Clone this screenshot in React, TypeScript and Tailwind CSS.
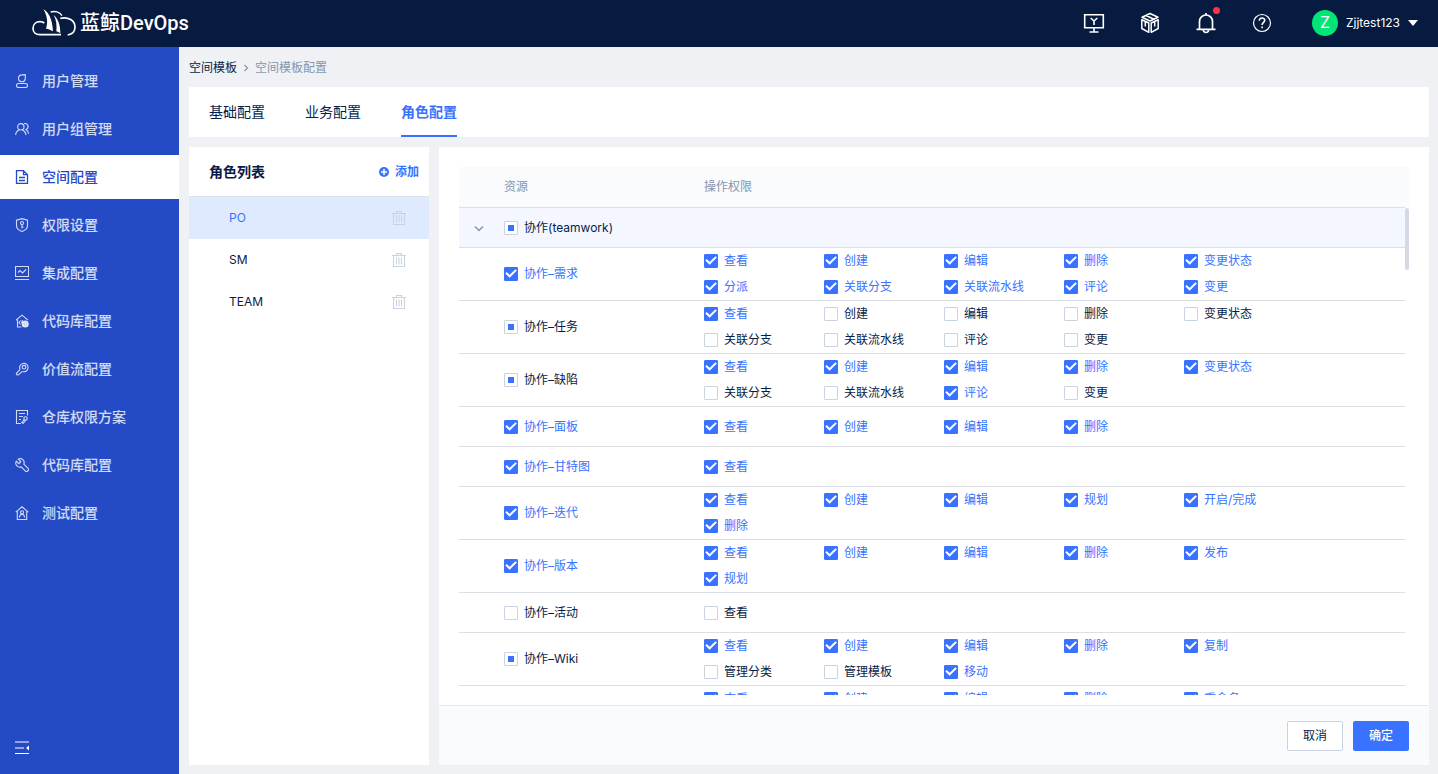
import { useEffect, useRef, useState, type ReactNode } from "react";

type State = "on" | "off" | "part";

function CheckItem({ label, initial }: { label: string; initial: State }) {
  const [state, setState] = useState<State>(initial);
  const ref = useRef<HTMLInputElement>(null);
  useEffect(() => {
    if (ref.current) ref.current.indeterminate = state === "part";
  }, [state]);
  const on = state === "on";
  return (
    <label className={`flex h-[26px] cursor-pointer items-center gap-1.5 whitespace-nowrap ${on ? "text-[#3872ff]" : "text-[#081c48]"}`}>
      <span className="grid size-3.5 shrink-0">
        <input
          ref={ref}
          type="checkbox"
          checked={on}
          onChange={() => setState(on ? "off" : "on")}
          className={`size-3.5 cursor-pointer appearance-none rounded-[1px] border [grid-area:1/1] ${on ? "border-[#3872ff] bg-[#3872ff]" : "border-[#c9d4e3] bg-white"}`}
        />
        {on && (
          <svg viewBox="0 0 14 14" className="pointer-events-none size-3.5 [grid-area:1/1]" fill="none" stroke="#fff" strokeWidth="2">
            <path d="M2 5.800 5.600 9.300 12.200 2.900" />
          </svg>
        )}
        {state === "part" && <span className="pointer-events-none size-1.5 place-self-center bg-[#3872ff] [grid-area:1/1]" />}
      </span>
      <span>{label}</span>
    </label>
  );
}

function Icon({ children, className = "size-3.5" }: { children: ReactNode; className?: string }) {
  return (
    <svg viewBox="0 0 14 14" className={`shrink-0 ${className}`} fill="none" stroke="currentColor" strokeWidth="1.1" aria-hidden="true">
      {children}
    </svg>
  );
}

const menu: { label: string; icon: ReactNode; active?: boolean }[] = [
  {
    label: "用户管理",
    icon: (
      <>
        <path d="M10.300.6v4A3.400 3.400 0 1 1 6.900.9Z" />
        <rect x="1.500" y="9.500" width="11" height="4" rx="2" />
      </>
    ),
  },
  {
    label: "用户组管理",
    icon: (
      <>
        <circle cx="5.800" cy="4.800" r="3.200" />
        <path d="M.6 13c.4-2.800 2-4.600 3.800-5.200M7.200 7.800c2 .8 3.400 2.500 3.800 5.200M9 1.700a3 3 0 0 1 2 5.700c1.400.8 2.300 2.400 2.500 4.400" />
      </>
    ),
  },
  {
    label: "空间配置",
    active: true,
    icon: <path d="M1.500.7h7l4 4v8.800h-11ZM8.500.5v4.200h4M4 7.500h6M4 10.500h6" strokeWidth="1.300" />,
  },
  {
    label: "权限设置",
    icon: (
      <>
        <path d="M7 .6 12.500 2.200v5.200c0 2.800-2.400 4.900-5.500 6-3.100-1.100-5.500-3.200-5.500-6V2.200Z" />
        <circle cx="7" cy="5" r="1.500" />
        <path d="M7 6.500v4M7 9h1.500" />
      </>
    ),
  },
  {
    label: "集成配置",
    icon: <path d="M.5.5h13v10H.5ZM3 6.500l2-2 2.500 2.500 3.500-3.500M0 13.500h14" />,
  },
  {
    label: "代码库配置",
    icon: (
      <>
        <path d="M1 6.200 7 1.200l6 5M2.500 5.500v7.500h4M5.500 6.500 4 8.500l1.500 2M7.500 6l-1 3" />
        <circle cx="10.200" cy="10" r="3" fill="currentColor" />
      </>
    ),
  },
  {
    label: "价值流配置",
    icon: (
      <>
        <path d="M5 7.200a4.200 4.200 0 1 1 2.700 2.400M5.200 7.300 1.600 11a1.300 1.300 0 0 0 1.800 1.800L7.300 9.300" />
        <circle cx="9" cy="5.200" r="1.800" />
      </>
    ),
  },
  {
    label: "仓库权限方案",
    icon: (
      <>
        <path d="M6 13.500H1.500V.5h11v5M4 3.500h6M4 6.500h4M4 9.500h2" />
        <circle cx="10.500" cy="8.500" r="1.700" />
        <path d="M9.300 9.700 6.800 12.500l1.400.8L10.500 10.500" />
      </>
    ),
  },
  {
    label: "代码库配置",
    icon: (
      <path d="M3.200 1.200 5.800 3.800 4 5.700 1.300 3.200C.4 5 .8 6.900 2.200 8.100c1.200 1 2.700 1.200 4 .8l4 4a1.900 1.900 0 0 0 2.700-2.700L8.800 6.200C9.500 4.600 9 2.800 7.900 1.700 6.600.5 4.700.4 3.200 1.200Z" />
    ),
  },
  {
    label: "测试配置",
    icon: (
      <>
        <path d="M.7 6.200 7 .8l6.300 5.400M2.300 5.200v8.300h9.400V5.200" />
        <circle cx="7" cy="6.300" r="1.600" />
        <path d="M4.400 11.500c.2-2.200 1.200-3.200 2.600-3.200s2.400 1 2.600 3.200" />
      </>
    ),
  },
];

type Row = { name: string; state: State; actions: [string, boolean][] };

const rows: Row[] = [
  { name: "协作–需求", state: "on", actions: [["查看", true], ["创建", true], ["编辑", true], ["删除", true], ["变更状态", true], ["分派", true], ["关联分支", true], ["关联流水线", true], ["评论", true], ["变更", true]] },
  { name: "协作–任务", state: "part", actions: [["查看", true], ["创建", false], ["编辑", false], ["删除", false], ["变更状态", false], ["关联分支", false], ["关联流水线", false], ["评论", false], ["变更", false]] },
  { name: "协作–缺陷", state: "part", actions: [["查看", true], ["创建", true], ["编辑", true], ["删除", true], ["变更状态", true], ["关联分支", false], ["关联流水线", false], ["评论", true], ["变更", false]] },
  { name: "协作–面板", state: "on", actions: [["查看", true], ["创建", true], ["编辑", true], ["删除", true]] },
  { name: "协作–甘特图", state: "on", actions: [["查看", true]] },
  { name: "协作–迭代", state: "on", actions: [["查看", true], ["创建", true], ["编辑", true], ["规划", true], ["开启/完成", true], ["删除", true]] },
  { name: "协作–版本", state: "on", actions: [["查看", true], ["创建", true], ["编辑", true], ["删除", true], ["发布", true], ["规划", true]] },
  { name: "协作–活动", state: "off", actions: [["查看", false]] },
  { name: "协作–Wiki", state: "part", actions: [["查看", true], ["创建", true], ["编辑", true], ["删除", true], ["复制", true], ["管理分类", false], ["管理模板", false], ["移动", true]] },
  { name: "协作–文件", state: "on", actions: [["查看", true], ["创建", true], ["编辑", true], ["删除", true], ["重命名", true], ["移动", true]] },
];

function Header() {
  return (
    <header className="flex h-[47px] shrink-0 items-center bg-[#071a40] pr-5 pb-0.5 pl-8 text-white">
      <a href="#" className="flex items-center gap-1 font-[Roboto,'Noto_Sans_CJK_SC',sans-serif] text-xl font-medium">
        <svg viewBox="96 24 132 84" className="h-7 w-11" fill="none" stroke="#fff" strokeWidth="5" aria-hidden="true">
          <path d="M183 101h-64c-12 0-20-8-20-19 0-12 9-20 21-20 5 0 9 1 13 4" />
          <path d="M130 25c17 9 27 31 29 66-6-4-13-7-21-8 6-17 5-37-8-58Z" fill="#fff" stroke="none" />
          <path d="M152 33c12-4 27 0 34 11" strokeWidth="4" />
          <path d="M161 42c13 11 20 29 20 55-4-3-8-5-12-6 2-18 0-34-8-49Z" fill="#fff" stroke="none" />
          <path d="M181 52c24-6 44 7 44 26 0 13-8 22-22 24" strokeWidth="5" />
        </svg>
        <span>蓝鲸DevOps</span>
      </a>
      <nav className="ml-auto flex items-center gap-8">
        <button type="button" aria-label="控制台" className="flex size-6 items-center justify-center">
          <svg viewBox="0 0 22 22" className="size-[22px]" fill="none" stroke="currentColor" strokeWidth="1.600">
            <path d="M1.700 2.700h18.600v13H1.700ZM11 15.700V20M6.500 20h9M7.700 6l3.300 3 3.300-3M11 9v4" />
          </svg>
        </button>
        <button type="button" aria-label="应用" className="flex size-6 items-center justify-center">
          <svg viewBox="0 0 22 22" className="size-[22px]" fill="none" stroke="currentColor" strokeWidth="1.500" strokeLinejoin="round">
            <path d="M11 1.500 19 5.300 11 9 3 5.300ZM2.800 7.800 9.800 11v9.300l-7-3.800ZM19.200 7.800 12.200 11v9.300l7-3.800ZM7 3.500l8 3.700M6.300 9.500v5M15.700 9.500v5" />
          </svg>
        </button>
        <button type="button" aria-label="通知" className="relative flex size-6 items-center justify-center">
          <svg viewBox="0 0 22 22" className="size-[22px]" fill="none" stroke="currentColor" strokeWidth="1.700">
            <path d="M1.500 17.300h19M4.500 17V9.500a6.500 6.500 0 0 1 13 0V17M8.200 17.500c.2 1.900 1.300 3 2.800 3s2.600-1.100 2.800-3M11 1v2" />
          </svg>
          <span className="absolute -top-1 -right-0.5 size-[7px] rounded-full bg-[#ff323f]" />
        </button>
        <button type="button" aria-label="帮助" className="flex size-6 items-center justify-center">
          <svg viewBox="0 0 22 22" className="size-[22px]" fill="none" stroke="currentColor" strokeWidth="1.200">
            <circle cx="11" cy="11" r="8.500" />
            <path d="M8.300 8.800c0-3.900 5.600-3.500 5.400-.3-.1 1.800-2.600 2-2.600 4.500M11.100 14.500v1.700" strokeWidth="1.600" />
          </svg>
        </button>
        <button type="button" className="ml-1.5 flex items-center gap-2 text-xs">
          <span className="flex size-[26px] items-center justify-center rounded-full bg-[#00e676] pb-0.5 text-base">Z</span>
          <span>Zjjtest123</span>
          <svg viewBox="0 0 10 6" className="h-1.5 w-2.5" fill="currentColor" aria-hidden="true">
            <path d="M0 0h10L5 6Z" />
          </svg>
        </button>
      </nav>
    </header>
  );
}

function Sidebar() {
  return (
    <aside className="flex w-[179px] shrink-0 flex-col bg-[#244bc5] pt-3">
      <nav className="flex flex-col gap-1">
        {menu.map((m, i) => (
          <a
            key={i}
            href="#"
            className={`flex h-11 items-center gap-[13px] pl-[15px] text-sm font-medium ${m.active ? "bg-white text-[#244bc5]" : "text-white/80"}`}
          >
            <Icon>{m.icon}</Icon>
            {m.label}
          </a>
        ))}
      </nav>
      <button type="button" aria-label="收起" className="mt-auto mb-[19px] ml-[15px] w-3.5 text-white">
        <Icon>
          <path d="M0 1h14M0 7h9M0 12.500h14" strokeWidth="1.200" />
          <path d="M14 4.500v5L11 7Z" fill="currentColor" stroke="none" />
        </Icon>
      </button>
    </aside>
  );
}

function Roles() {
  const [current, setCurrent] = useState("PO");
  return (
    <section className="w-60 shrink-0 bg-white">
      <div className="flex h-[50px] items-center justify-between border-b border-[#dce3ec] pr-2.5 pl-5">
        <h2 className="text-sm font-bold">角色列表</h2>
        <button type="button" className="flex items-center gap-1.5 text-xs font-bold text-[#3872ff]">
          <svg viewBox="0 0 10 10" className="size-2.5" aria-hidden="true">
            <circle cx="5" cy="5" r="5" fill="currentColor" />
            <path d="M5 2v6M2 5h6" stroke="#fff" strokeWidth="1.500" />
          </svg>
          添加
        </button>
      </div>
      <ul>
        {["PO", "SM", "TEAM"].map((r) => (
          <li key={r} className={`flex h-[42px] items-center justify-between pr-[23px] pl-10 ${r === current ? "bg-[#dfeaff] text-[#3872ff]" : ""}`}>
            <button type="button" onClick={() => setCurrent(r)}>
              {r}
            </button>
            <button type="button" aria-label={`删除 ${r}`} className="text-[#c9d4e3]">
              <Icon>
                <path d="M0 2.500h14M4.500 2.500v-2h5v2M1.500 2.500v11h11v-11M4.500 4.500v7M7 4.500v7M9.500 4.500v7" />
              </Icon>
            </button>
          </li>
        ))}
      </ul>
    </section>
  );
}

const rowGrid = "grid grid-cols-[45px_200px_1fr]";

function Permissions() {
  return (
    <section className="flex min-w-0 flex-1 flex-col bg-white">
      <div className="relative mx-5 mt-5 mb-2.5 flex min-h-0 flex-1 flex-col">
        <table className="flex min-h-0 flex-1 flex-col">
          <thead className="block shrink-0 bg-[#fafbfd] text-[#8496ae]">
            <tr className={`mr-1 h-[41px] items-center border-b border-[#dcdfe6] ${rowGrid}`}>
              <th aria-label="展开" />
              <th className="text-left font-normal">资源</th>
              <th className="text-left font-normal">操作权限</th>
            </tr>
          </thead>
          <tbody className="mr-1 block min-h-0 flex-1 overflow-y-auto [scrollbar-width:none]">
            <tr className={`h-10 items-center border-b border-[#dcdfe6] bg-[#f4f7ff] ${rowGrid}`}>
              <td>
                <button type="button" aria-label="收起分组" className="ml-3.5 flex size-3 items-center justify-center text-[#8496ae]">
                  <svg viewBox="0 0 12 12" className="size-3" fill="none" stroke="currentColor" strokeWidth="1.500">
                    <path d="m2 4.500 4 4 4-4" />
                  </svg>
                </button>
              </td>
              <td>
                <CheckItem label="协作(teamwork)" initial="part" />
              </td>
              <td />
            </tr>
            {rows.map((r) => (
              <tr key={r.name} className={`min-h-10 items-center border-b border-[#dcdfe6] ${rowGrid}`}>
                <td />
                <td>
                  <CheckItem label={r.name} initial={r.state} />
                </td>
                <td className="grid grid-cols-[repeat(5,120px)]">
                  {r.actions.map(([label, on]) => (
                    <CheckItem key={label} label={label} initial={on ? "on" : "off"} />
                  ))}
                </td>
              </tr>
            ))}
          </tbody>
        </table>
        <span className="absolute top-[41px] right-0 h-[62px] w-1 rounded-xs bg-[#d3dae3]" />
      </div>
      <footer className="flex h-[60px] shrink-0 items-center justify-end gap-2.5 border-t border-[#e6e9ee] bg-[#fafbfd] px-5">
        <button type="button" className="h-[30px] rounded-xs border border-[#c9d4e3] bg-white px-[15px]">
          取消
        </button>
        <button type="button" className="h-[30px] rounded-xs bg-[#3872ff] px-4 font-medium text-white">
          确定
        </button>
      </footer>
    </section>
  );
}

export default function App() {
  const [tab, setTab] = useState("角色配置");
  return (
    <div className="flex h-screen flex-col bg-[#f0f1f5] font-[Inter,'Noto_Sans_CJK_SC',sans-serif] text-xs text-[#081c48]">
      <Header />
      <div className="flex min-h-0 flex-1">
        <Sidebar />
        <main className="flex min-w-0 flex-1 flex-col px-2.5 pr-[9px] pb-[9px]">
          <nav aria-label="路径" className="flex h-10 shrink-0 items-center gap-1.5 pt-0.5">
            <a href="#">空间模板</a>
            <svg viewBox="0 0 6 8" className="h-2 w-1.5" fill="none" stroke="#8496ae" strokeWidth="1.200" aria-hidden="true">
              <path d="m1.500 1 3 3-3 3" />
            </svg>
            <span className="text-[#8496ae]">空间模板配置</span>
          </nav>
          <div role="tablist" className="flex h-[50px] shrink-0 gap-10 bg-white px-5 text-sm">
            {["基础配置", "业务配置", "角色配置"].map((t) => (
              <button
                key={t}
                type="button"
                role="tab"
                aria-selected={t === tab}
                onClick={() => setTab(t)}
                className={`border-y-2 border-t-transparent ${t === tab ? "border-b-[#3872ff] font-bold text-[#3872ff]" : "border-b-transparent"}`}
              >
                {t}
              </button>
            ))}
          </div>
          <div className="mt-2.5 flex min-h-0 flex-1 gap-2.5">
            <Roles />
            <Permissions />
          </div>
        </main>
      </div>
    </div>
  );
}
